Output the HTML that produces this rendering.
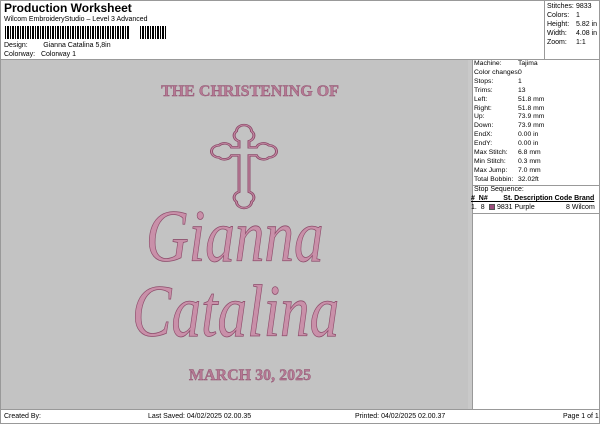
<!DOCTYPE html>
<html><head><style>
*{margin:0;padding:0;box-sizing:border-box}
body{width:600px;height:424px;background:#fff;font-family:"Liberation Sans",sans-serif;font-size:7px;color:#000;position:relative;overflow:hidden}
.a{position:absolute;white-space:nowrap}
.pk{color:#b57a94;font-family:"Liberation Serif",serif;font-weight:bold;-webkit-text-stroke:0.4px #8e4d6c;text-align:center}
.sc{color:#c990a9;font-family:"Liberation Serif",serif;font-style:italic;-webkit-text-stroke:0.8px #8e4d6c;transform-origin:0 0}
</style></head><body>
<div class="a" style="left:0;top:0;width:600px;height:424px;border:1px solid #999"></div>
<div class="a" style="left:4px;top:1px;font-size:12px;font-weight:bold">Production Worksheet</div>
<div class="a" style="left:4px;top:16px">Wilcom EmbroideryStudio – Level 3 Advanced</div>
<div class="a" style="left:5px;top:26px;width:125px;height:13px;background:repeating-linear-gradient(90deg,#000 0 1px,#fff 1px 2px,#000 2px 3px,#000 3px 4px,#fff 4px 5px)"></div>
<div class="a" style="left:140px;top:26px;width:27px;height:13px;background:repeating-linear-gradient(90deg,#000 0 1px,#fff 1px 2px,#000 2px 4px,#fff 4px 5px)"></div>
<div class="a" style="left:4px;top:42px">Design:&nbsp;&nbsp;&nbsp;&nbsp;&nbsp;&nbsp;&nbsp; Gianna Catalina 5,8in</div>
<div class="a" style="left:4px;top:51px">Colorway:&nbsp;&nbsp; Colorway 1</div>
<div class="a" style="left:544px;top:0;width:1px;height:59px;background:#999"></div>
<div class="a" style="left:547px;top:2px;line-height:9px">Stitches:<br>Colors:<br>Height:<br>Width:<br>Zoom:</div>
<div class="a" style="left:576px;top:2px;line-height:9px">9833<br>1<br>5.82 in<br>4.08 in<br>1:1</div>
<div class="a" style="left:0;top:59px;width:600px;height:1px;background:#999"></div>
<div class="a" style="left:1px;top:60px;width:467px;height:349px;background:#c3c3c3"></div>
<div class="a" style="left:468px;top:60px;width:4px;height:349px;background:#c9c9c9"></div>
<div class="a" style="left:472px;top:60px;width:1px;height:349px;background:#999"></div>
<div class="a" style="left:474px;top:60px;line-height:8.9px;font-size:6.8px">Machine:<br>Color changes:<br>Stops:<br>Trims:<br>Left:<br>Right:<br>Up:<br>Down:<br>EndX:<br>EndY:<br>Max Stitch:<br>Min Stitch:<br>Max Jump:<br>Total Bobbin:</div>
<div class="a" style="left:518px;top:60px;line-height:8.9px;font-size:6.8px">Tajima<br>0<br>1<br>13<br>51.8 mm<br>51.8 mm<br>73.9 mm<br>73.9 mm<br>0.00 in<br>0.00 in<br>6.8 mm<br>0.3 mm<br>7.0 mm<br>32.02ft</div>
<div class="a" style="left:473px;top:185px;width:127px;height:1px;background:#999"></div>
<div class="a" style="left:473px;top:213px;width:127px;height:1px;background:#999"></div>
<div class="a" style="left:474px;top:186px">Stop Sequence:</div>
<div class="a" style="left:471px;top:195px;font-weight:bold;text-decoration:underline;word-spacing:0">#&nbsp; N#&nbsp;&nbsp;&nbsp;&nbsp;&nbsp;&nbsp;&nbsp; St. Description Code Brand</div>
<div class="a" style="left:471px;top:204px">1.&nbsp; 8</div>
<div class="a" style="left:489px;top:204px;width:6px;height:6px;background:#9c4f7e;border:1px solid #555"></div>
<div class="a" style="left:497px;top:204px">9831 Purple</div>
<div class="a" style="left:566px;top:204px">8 Wilcom</div>
<div class="a" style="left:0;top:409px;width:600px;height:1px;background:#999"></div>
<div class="a" style="left:4px;top:413px">Created By:</div>
<div class="a" style="left:148px;top:413px">Last Saved: 04/02/2025 02.00.35</div>
<div class="a" style="left:355px;top:413px">Printed: 04/02/2025 02.00.37</div>
<div class="a" style="left:563px;top:413px">Page 1 of 1</div>
<div class="a pk" style="left:140px;top:83px;width:220px;font-size:16px">THE CHRISTENING OF</div>
<svg class="a" style="left:209px;top:118px" width="70" height="92" viewBox="8 3 56 91" preserveAspectRatio="none">
<path d="M30 16 a6 6 0 1 1 12 0 a6 6 0 0 1 -2 10 v6 h6 a6 6 0 0 1 10 -2 a6 6 0 1 1 0 12 a6 6 0 0 1 -10 -2 h-6 v36 a6 6 0 0 1 2 10 a6 6 0 1 1 -12 0 a6 6 0 0 1 2 -10 v-36 h-6 a6 6 0 0 1 -10 2 a6 6 0 1 1 0 -12 a6 6 0 0 1 10 2 h6 v-6 a6 6 0 0 1 -2 -10z" fill="none" stroke="#8e4d6c" stroke-width="2.4"/>
<path d="M30 16 a6 6 0 1 1 12 0 a6 6 0 0 1 -2 10 v6 h6 a6 6 0 0 1 10 -2 a6 6 0 1 1 0 12 a6 6 0 0 1 -10 -2 h-6 v36 a6 6 0 0 1 2 10 a6 6 0 1 1 -12 0 a6 6 0 0 1 2 -10 v-36 h-6 a6 6 0 0 1 -10 2 a6 6 0 1 1 0 -12 a6 6 0 0 1 10 2 h6 v-6 a6 6 0 0 1 -2 -10z" fill="none" stroke="#c990a9" stroke-width="0.8"/>
</svg>
<div class="a sc" style="left:146px;top:195px;font-size:74px;transform:scaleX(.8)">Gianna</div>
<div class="a sc" style="left:132px;top:270px;font-size:74px;transform:scaleX(.8)">Catalina</div>
<div class="a pk" style="left:140px;top:367px;width:220px;font-size:16px">MARCH 30, 2025</div>
</body></html>
